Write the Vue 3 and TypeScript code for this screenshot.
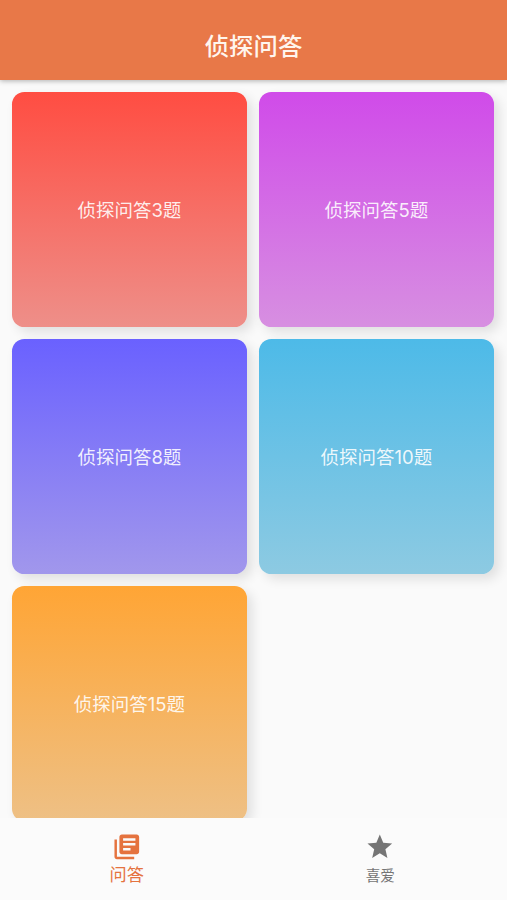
<script setup lang="ts">
interface QuizCard {
  title: string
  tone: string
}

const cards: QuizCard[] = [
  { title: '侦探问答3题', tone: 'red' },
  { title: '侦探问答5题', tone: 'purple' },
  { title: '侦探问答8题', tone: 'indigo' },
  { title: '侦探问答10题', tone: 'blue' },
  { title: '侦探问答15题', tone: 'orange' },
]
</script>

<template>
  <div class="screen">
    <header class="app-bar">
      <h1 class="title">侦探问答</h1>
    </header>
    <main class="content">
      <div class="grid">
        <button v-for="card in cards" :key="card.title" class="card" :class="card.tone">
          {{ card.title }}
        </button>
      </div>
    </main>
    <nav class="tabs">
      <a class="tab active">
        <svg class="icon" viewBox="0 0 24 24" fill="currentColor">
          <path d="M4 6H2v14c0 1.1.9 2 2 2h14v-2H4V6zm16-4H8c-1.1 0-2 .9-2 2v12c0 1.1.9 2 2 2h12c1.1 0 2-.9 2-2V4c0-1.1-.9-2-2-2zm-1 9H9V9h10v2zm-4 4H9v-2h6v2zm4-8H9V5h10v2z" />
        </svg>
        <span class="label">问答</span>
      </a>
      <a class="tab">
        <svg class="icon" viewBox="0 0 24 24" fill="currentColor">
          <path d="M12 17.27L18.18 21l-1.64-7.03L22 9.24l-7.19-.61L12 2 9.19 8.63 2 9.24l5.46 4.73L5.82 21z" />
        </svg>
        <span class="label">喜爱</span>
      </a>
    </nav>
  </div>
</template>

<style>
body {
  margin: 0;
  background: #fafafa;
}
</style>

<style scoped>
.screen {
  display: flex;
  flex-direction: column;
  height: 100vh;
  overflow: hidden;
  background: #fafafa;
  font-family: Inter, "Noto Sans CJK SC", sans-serif;
}

.app-bar {
  position: relative;
  z-index: 1;
  flex: none;
  box-sizing: border-box;
  height: 80px;
  padding-top: 12px;
  display: flex;
  align-items: center;
  justify-content: center;
  background: #e87848;
  box-shadow: 0 1px 5px rgba(0, 0, 0, 0.3);
}

.title {
  margin: 0;
  font-size: 24.4px;
  line-height: 36px;
  font-weight: 500;
  color: #fff6ee;
}

.content {
  flex: 1;
  min-height: 0;
  overflow: hidden;
}

.grid {
  display: grid;
  grid-template-columns: repeat(2, 1fr);
  gap: 12px;
  padding: 12.4px 12.6px 12.4px 12.4px;
}

.card {
  aspect-ratio: 1;
  display: flex;
  align-items: center;
  justify-content: center;
  padding: 0 1px 2px 0;
  border: 0;
  border-radius: 12.3px;
  box-shadow: 5px 5px 12px rgba(0, 0, 0, 0.11);
  font: inherit;
  font-size: 18.5px;
  color: rgba(255, 255, 255, 0.9);
}

.red {
  background: linear-gradient(#ff4d42, #ee8f89);
}

.purple {
  background: linear-gradient(#d04be9, #d78fe1);
}

.indigo {
  background: linear-gradient(#6a61ff, #a197ec);
}

.blue {
  background: linear-gradient(#4dbae8, #8dcae2);
}

.orange {
  background: linear-gradient(#ffa535, #eec085);
}

.tabs {
  position: relative;
  flex: none;
  box-sizing: border-box;
  height: 82px;
  display: flex;
  background: #fbfbfb;
}

.tab {
  flex: 1;
  display: flex;
  flex-direction: column;
  align-items: center;
  padding-top: 14.4px;
  color: #757575;
}

.icon {
  display: block;
  width: 29.6px;
  height: 29.6px;
}

.label {
  font-size: 14.6px;
  line-height: 29px;
}

.active {
  color: #e5733f;
}

.active .label {
  font-size: 17.2px;
  line-height: 26px;
}
</style>
